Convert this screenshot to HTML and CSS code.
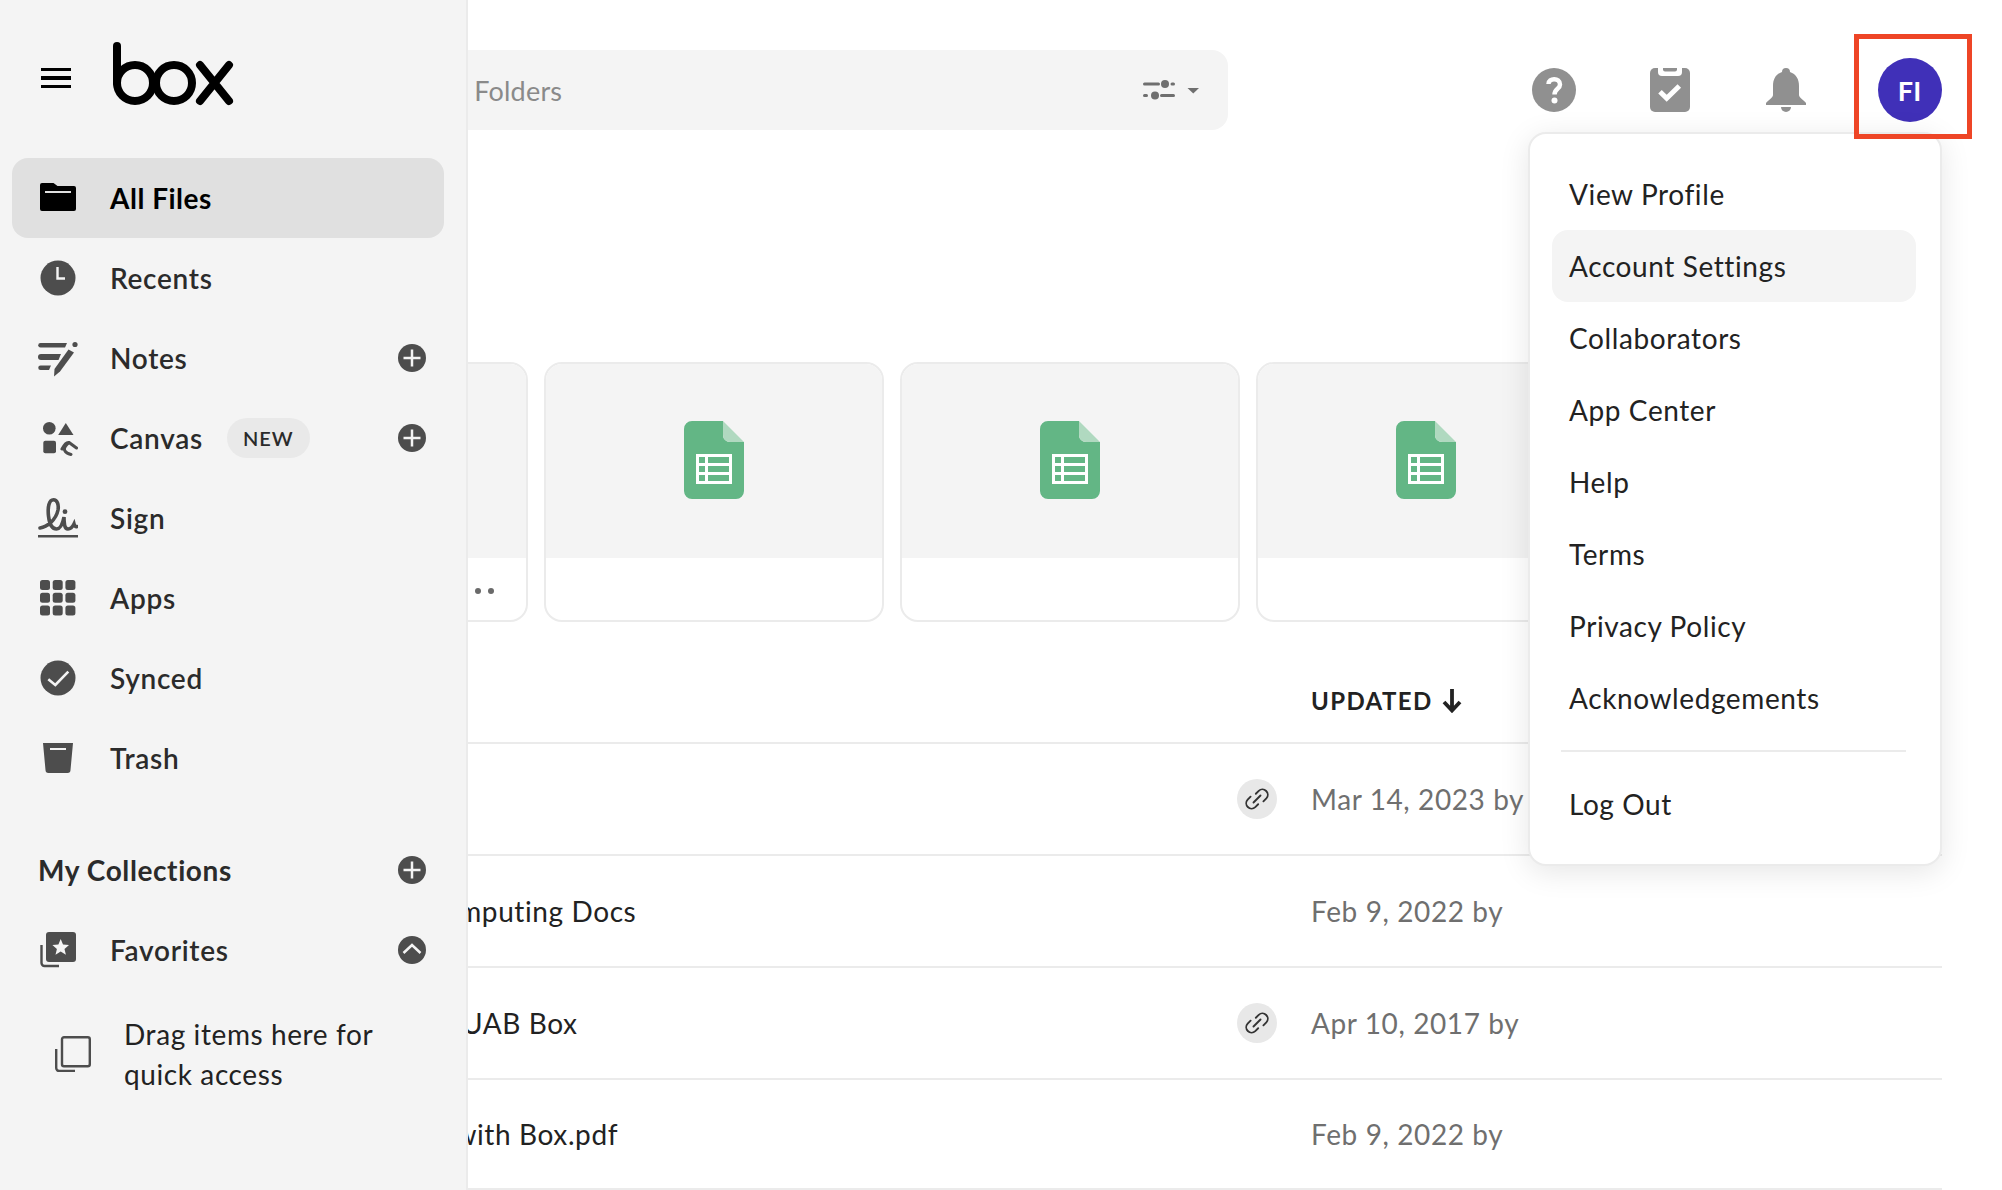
FILE: index.html
```html
<!DOCTYPE html>
<html lang="en">
<head>
    <meta charset="UTF-8">
    <meta name="viewport" content="width=device-width, initial-scale=1.0">
    <title>All Files | Box</title>
    <link rel="stylesheet" href="styles.css">
</head>
<body>
    <div class="app">
        <aside class="sidebar">
            <div class="brand">
                <div class="hamburger"><span></span><span></span><span></span></div>
                <svg class="logo" viewBox="112 42 122 64" fill="none" stroke="#000" stroke-width="8" stroke-linecap="round">
                    <path d="M117 46V83"/>
                    <circle cx="135" cy="83" r="18"/>
                    <circle cx="174" cy="83" r="18"/>
                    <path d="M200 65L229 101M229 65L200 101"/>
                </svg>
            </div>

            <nav class="nav">
                <a class="nav-item active">
                    <svg class="nav-icon" viewBox="0 0 40 40">
                        <path d="M4 5H15.500L19.500 8H36a2 2 0 0 1 2 2V31a2 2 0 0 1-2 2H4a2 2 0 0 1-2-2V7a2 2 0 0 1 2-2z" fill="#000"/>
                        <rect x="7" y="13" width="26" height="2" fill="#e0e0e0"/>
                    </svg>
                    <span>All Files</span>
                </a>
                <a class="nav-item">
                    <svg class="nav-icon" viewBox="0 0 40 40">
                        <circle cx="20" cy="20" r="17.500" fill="#4d4d4d"/>
                        <path d="M19.500 9V20.500H27" fill="none" stroke="#f4f4f4" stroke-width="2.400"/>
                    </svg>
                    <span>Recents</span>
                </a>
                <a class="nav-item">
                    <svg class="nav-icon" viewBox="0 0 40 40" fill="#4d4d4d">
                        <path d="M2.500 5H29L27 9.500H2.500a2.250 2.250 0 0 1 0-4.500z"/>
                        <path d="M3 16H23L20.500 22H3a3 3 0 0 1 0-6z"/>
                        <path d="M2.500 27.500H13L11 32H2.500a2.250 2.250 0 0 1 0-4.500z"/>
                        <path d="M16 38.500L16.500 31L30.500 11.500L36 14.500L22 33.500z"/>
                        <circle cx="37" cy="6.500" r="2.600"/>
                    </svg>
                    <span>Notes</span>
                    <svg class="round-btn" viewBox="0 0 28 28">
                        <circle cx="14" cy="14" r="14" fill="#4d4d4d"/>
                        <path d="M14 5.500V22.500M5.500 14H22.500" stroke="#f4f4f4" stroke-width="2.500"/>
                    </svg>
                </a>
                <a class="nav-item">
                    <svg class="nav-icon" viewBox="0 0 40 40" fill="#4d4d4d">
                        <circle cx="11.300" cy="10.300" r="6.300"/>
                        <path d="M27.800 5L35.500 17H20.200z"/>
                        <rect x="5.300" y="22.700" width="12.700" height="12.500" rx="2"/>
                        <path d="M24 31C26 27 29 24 31 24.500L38.500 30M31 24.500C28 27 25 30 27 33C28 35 31 36 33 36.500" fill="none" stroke="#4d4d4d" stroke-width="3" stroke-linecap="round"/>
                    </svg>
                    <span>Canvas</span>
                    <span class="pill">NEW</span>
                    <svg class="round-btn" viewBox="0 0 28 28">
                        <circle cx="14" cy="14" r="14" fill="#4d4d4d"/>
                        <path d="M14 5.500V22.500M5.500 14H22.500" stroke="#f4f4f4" stroke-width="2.500"/>
                    </svg>
                </a>
                <a class="nav-item">
                    <svg class="nav-icon" viewBox="0 0 40 40">
                        <path d="M2 30C9 29 18 22 20 12C21 6 19 1.800 15.500 1.800C11 1.800 9.500 9 10.500 18C11.500 27 14 31 18.500 31C23 31 25 24 26 19C26 24 26 31 30 31C33 31 35 28 36 26C36.500 28 37.500 29 39 28.500" fill="none" stroke="#4d4d4d" stroke-width="3.600" stroke-linecap="round"/>
                        <circle cx="27" cy="13.700" r="2.400" fill="#4d4d4d"/>
                        <rect x="0" y="37" width="40" height="2.500" fill="#4d4d4d"/>
                    </svg>
                    <span>Sign</span>
                </a>
                <a class="nav-item">
                    <svg class="nav-icon" viewBox="0 0 40 40" fill="#4d4d4d">
                        <rect x="2" y="2" width="10" height="10" rx="2.500"/>
                        <rect x="14.700" y="2" width="10" height="10" rx="2.500"/>
                        <rect x="27.400" y="2" width="10" height="10" rx="2.500"/>
                        <rect x="2" y="14.700" width="10" height="10" rx="2.500"/>
                        <rect x="14.700" y="14.700" width="10" height="10" rx="2.500"/>
                        <rect x="27.400" y="14.700" width="10" height="10" rx="2.500"/>
                        <rect x="2" y="27.400" width="10" height="10" rx="2.500"/>
                        <rect x="14.700" y="27.400" width="10" height="10" rx="2.500"/>
                        <rect x="27.400" y="27.400" width="10" height="10" rx="2.500"/>
                    </svg>
                    <span>Apps</span>
                </a>
                <a class="nav-item">
                    <svg class="nav-icon" viewBox="0 0 40 40">
                        <circle cx="20" cy="20" r="17.500" fill="#4d4d4d"/>
                        <path d="M10.300 21.300L17.300 27L30.300 13.700" fill="none" stroke="#f4f4f4" stroke-width="2.600"/>
                    </svg>
                    <span>Synced</span>
                </a>
                <a class="nav-item">
                    <svg class="nav-icon" viewBox="0 0 40 40">
                        <path d="M5 5H35L32.500 32a3 3 0 0 1-3 3H10.500a3 3 0 0 1-3-3z" fill="#4d4d4d"/>
                        <rect x="12" y="10" width="16" height="2" fill="#f4f4f4"/>
                    </svg>
                    <span>Trash</span>
                </a>
            </nav>

            <div class="collections">
                <div class="collections-head">
                    <span>My Collections</span>
                    <svg class="round-btn" viewBox="0 0 28 28">
                        <circle cx="14" cy="14" r="14" fill="#4d4d4d"/>
                        <path d="M14 5.500V22.500M5.500 14H22.500" stroke="#f4f4f4" stroke-width="2.500"/>
                    </svg>
                </div>
                <a class="nav-item">
                    <svg class="nav-icon" viewBox="0 0 40 40">
                        <rect x="8" y="2" width="30" height="30" rx="3" fill="#4d4d4d"/>
                        <path d="M3.500 15V33a3 3 0 0 0 3 3H21" fill="none" stroke="#4d4d4d" stroke-width="2.400"/>
                        <path d="M22.700 9L25 14.500L31 15L26.500 18.900L27.900 24.700L22.700 21.600L17.500 24.700L18.900 18.900L14.400 15L20.400 14.500z" fill="#f4f4f4"/>
                    </svg>
                    <span>Favorites</span>
                    <svg class="round-btn" viewBox="0 0 28 28">
                        <circle cx="14" cy="14" r="14" fill="#4d4d4d"/>
                        <path d="M5.500 17L14 9L22.500 17" fill="none" stroke="#f4f4f4" stroke-width="2.500"/>
                    </svg>
                </a>
                <div class="drag-hint">
                    <svg class="drag-icon" viewBox="0 0 36 36" fill="none" stroke="#4d4d4d" stroke-width="2.400">
                        <rect x="7" y="1.200" width="27.800" height="29" rx="2"/>
                        <path d="M1.200 13V32a3 3 0 0 0 3 3H20"/>
                    </svg>
                    <p>Drag items here for<br>quick access</p>
                </div>
            </div>
        </aside>

        <main class="main">
            <header class="topbar">
                <div class="search">
                    <span class="search-text">Search Files and Folders</span>
                    <svg class="filter-icon" viewBox="0 0 56 20" fill="#6f6f6f">
                        <rect x="0" y="2.500" width="17" height="3" rx="1.500"/>
                        <circle cx="22" cy="4" r="4"/>
                        <rect x="27.500" y="2.500" width="4.500" height="3" rx="1.500"/>
                        <rect x="0" y="14" width="5" height="3" rx="1.500"/>
                        <circle cx="12" cy="15.500" r="4"/>
                        <rect x="17" y="14" width="15" height="3" rx="1.500"/>
                        <path d="M44.500 8H56L50.250 13.500z"/>
                    </svg>
                </div>
                <div class="actions">
                    <svg class="action-icon" viewBox="0 0 44 44">
                        <circle cx="22" cy="22" r="22" fill="#909090"/>
                        <path d="M16.500 16C16.500 9.500 28 9.500 28 16.500C28 21 22.500 20.500 22.500 26.500" fill="none" stroke="#fff" stroke-width="4.500"/>
                        <circle cx="22.500" cy="32.500" r="3" fill="#fff"/>
                    </svg>
                    <svg class="action-icon" viewBox="0 0 44 44">
                        <rect x="2" y="0" width="40" height="44" rx="5" fill="#909090"/>
                        <path d="M10 0H34V4a4 4 0 0 1-4 4H14a4 4 0 0 1-4-4z" fill="#fff"/>
                        <path d="M15 0H29V1.500a2 2 0 0 1-2 2H17a2 2 0 0 1-2-2z" fill="#909090"/>
                        <path d="M12 23.700L18.700 30.300L31.300 18" fill="none" stroke="#fff" stroke-width="5"/>
                    </svg>
                    <svg class="action-icon" viewBox="0 0 44 44" fill="#909090">
                        <path d="M22 0a4 4 0 0 1 4 4C32 6 35 11 35 18V27C35 30 40 32 42 35V37H2V35C4 32 9 30 9 27V18C9 11 12 6 18 4a4 4 0 0 1 4-4z"/>
                        <path d="M17 39H27a5 5 0 0 1-10 0z"/>
                    </svg>
                    <div class="avatar">
                        FI
                        <div class="callout"></div>
                    </div>
                </div>
            </header>

            <section class="cards">
                <div class="card">
                    <div class="card-preview"></div>
                    <div class="card-foot">
                        <div class="dots"><span></span><span></span><span></span></div>
                    </div>
                </div>
                <div class="card">
                    <div class="card-preview">
                        <svg class="sheet-icon" viewBox="0 0 60 78">
                            <path d="M8 0H39V14a7 7 0 0 0 7 7H60V70a8 8 0 0 1-8 8H8a8 8 0 0 1-8-8V8a8 8 0 0 1 8-8z" fill="#63b685"/>
                            <path d="M39 0L60 21H46a7 7 0 0 1-7-7z" fill="#b0d9c0"/>
                            <path fill-rule="evenodd" d="M12 33H48V63H12zM15 36V42H21V36zM24 36V42H45V36zM15 45V51H21V45zM24 45V51H45V45zM15 54V60H21V54zM24 54V60H45V54z" fill="#fff"/>
                        </svg>
                    </div>
                    <div class="card-foot"></div>
                </div>
                <div class="card">
                    <div class="card-preview">
                        <svg class="sheet-icon" viewBox="0 0 60 78">
                            <path d="M8 0H39V14a7 7 0 0 0 7 7H60V70a8 8 0 0 1-8 8H8a8 8 0 0 1-8-8V8a8 8 0 0 1 8-8z" fill="#63b685"/>
                            <path d="M39 0L60 21H46a7 7 0 0 1-7-7z" fill="#b0d9c0"/>
                            <path fill-rule="evenodd" d="M12 33H48V63H12zM15 36V42H21V36zM24 36V42H45V36zM15 45V51H21V45zM24 45V51H45V45zM15 54V60H21V54zM24 54V60H45V54z" fill="#fff"/>
                        </svg>
                    </div>
                    <div class="card-foot"></div>
                </div>
                <div class="card">
                    <div class="card-preview">
                        <svg class="sheet-icon" viewBox="0 0 60 78">
                            <path d="M8 0H39V14a7 7 0 0 0 7 7H60V70a8 8 0 0 1-8 8H8a8 8 0 0 1-8-8V8a8 8 0 0 1 8-8z" fill="#63b685"/>
                            <path d="M39 0L60 21H46a7 7 0 0 1-7-7z" fill="#b0d9c0"/>
                            <path fill-rule="evenodd" d="M12 33H48V63H12zM15 36V42H21V36zM24 36V42H45V36zM15 45V51H21V45zM24 45V51H45V45zM15 54V60H21V54zM24 54V60H45V54z" fill="#fff"/>
                        </svg>
                    </div>
                    <div class="card-foot"></div>
                </div>
            </section>

            <section class="files">
                <div class="files-head">
                    <span class="updated-head">UPDATED
                        <svg class="sort-arrow" viewBox="0 0 20 24" fill="none" stroke="#222" stroke-width="3.800">
                            <path d="M10 0V21M2 13L10 21.500L18 13"/>
                        </svg>
                    </span>
                </div>
                <div class="file-row">
                    <span class="file-name"></span>
                    <span class="link-chip">
                        <svg viewBox="0 0 24 24" fill="none" stroke="#333" stroke-width="1.600" stroke-linecap="round">
                            <path d="M11 7.500L13.500 5a4.600 4.600 0 0 1 6.500 6.500L17.500 14M13 16.500L10.500 19a4.600 4.600 0 0 1-6.500-6.500L6.500 10M9 15L15 9"/>
                        </svg>
                    </span>
                    <span class="file-date">Mar 14, 2023 by</span>
                </div>
                <div class="file-row">
                    <span class="file-name name-docs">Research &amp; Computing Docs</span>
                    <span></span>
                    <span class="file-date">Feb 9, 2022 by</span>
                </div>
                <div class="file-row">
                    <span class="file-name name-uab">UAB Box</span>
                    <span class="link-chip">
                        <svg viewBox="0 0 24 24" fill="none" stroke="#333" stroke-width="1.600" stroke-linecap="round">
                            <path d="M11 7.500L13.500 5a4.600 4.600 0 0 1 6.500 6.500L17.500 14M13 16.500L10.500 19a4.600 4.600 0 0 1-6.500-6.500L6.500 10M9 15L15 9"/>
                        </svg>
                    </span>
                    <span class="file-date">Apr 10, 2017 by</span>
                </div>
                <div class="file-row file-row-last">
                    <span class="file-name name-guide">Getting Started with Box.pdf</span>
                    <span></span>
                    <span class="file-date">Feb 9, 2022 by</span>
                </div>
            </section>
        </main>

        <div class="menu">
            <a class="menu-item">View Profile</a>
            <a class="menu-item hover">Account Settings</a>
            <a class="menu-item">Collaborators</a>
            <a class="menu-item">App Center</a>
            <a class="menu-item">Help</a>
            <a class="menu-item">Terms</a>
            <a class="menu-item">Privacy Policy</a>
            <a class="menu-item">Acknowledgements</a>
            <div class="menu-divider"></div>
            <a class="menu-item">Log Out</a>
        </div>
    </div>
</body>
</html>
```

FILE: styles.css
```css
* {
    box-sizing: border-box;
}

body {
    margin: 0;
    font-family: Lato, "Open Sans", sans-serif;
    font-size: 28px;
    letter-spacing: 0.6px;
    color: #222;
    background: white;
}

.app {
    position: relative;
    display: flex;
    height: 100vh;
    overflow: hidden;
}

/* sidebar */
.sidebar {
    position: relative;
    z-index: 2;
    flex: none;
    width: 468px;
    background-color: #f4f4f4;
    border-right: 2px solid #ebebeb;
}

.brand {
    display: flex;
    align-items: flex-start;
    gap: 41px;
    height: 158px;
    padding: 42px 0 0 41px;
}

.hamburger {
    display: flex;
    flex-direction: column;
    gap: 5.300px;
    margin-top: 26px;
}

.hamburger span {
    display: block;
    width: 30px;
    height: 3.200px;
    background-color: #000;
}

.logo {
    width: 122px;
    height: 64px;
}

.nav {
    margin: 0 22px 0 12px;
}

.nav-item {
    display: flex;
    align-items: center;
    height: 80px;
    padding: 0 18px 0 26px;
    border-radius: 16px;
    font-weight: 600;
    letter-spacing: 0.7px;
    color: #2b2b2b;
}

.nav-item.active {
    background-color: #e0e0e0;
    font-weight: 700;
    letter-spacing: 0.5px;
    color: #000;
}

.nav-icon {
    flex: none;
    width: 40px;
    height: 40px;
    margin-right: 32px;
}

.round-btn {
    flex: none;
    width: 28px;
    height: 28px;
    margin-left: auto;
}

.pill {
    margin-left: 24px;
    padding: 0 16px;
    height: 40px;
    line-height: 40px;
    border-radius: 20px;
    background-color: #e9e9e9;
    font-size: 20px;
    letter-spacing: 1px;
}

.collections {
    margin: 32px 22px 0 12px;
}

.collections-head {
    display: flex;
    align-items: center;
    height: 80px;
    padding: 0 18px 0 26px;
    font-weight: 700;
    letter-spacing: 0.6px;
    color: #2b2b2b;
}

.drag-hint {
    display: flex;
    align-items: center;
    gap: 33px;
    margin-top: 24px;
    padding-left: 43px;
}

.drag-icon {
    flex: none;
    width: 36px;
    height: 36px;
}

.drag-hint p {
    margin: 0;
    line-height: 40px;
}

/* main column, its left part runs under the sidebar */
.main {
    flex: none;
    width: 1864px;
    margin-left: -330px;
    padding-right: 60px;
}

.topbar {
    display: flex;
    align-items: center;
    justify-content: space-between;
    height: 130px;
    padding-top: 50px;
}

.search {
    display: flex;
    align-items: center;
    justify-content: space-between;
    width: 1090px;
    height: 80px;
    padding: 0 29px 0 135px;
    background-color: #f4f4f4;
    border-radius: 16px;
    color: #8a8a8a;
    font-size: 27px;
    letter-spacing: 0.2px;
}

.filter-icon {
    width: 56px;
    height: 20px;
}

.actions {
    display: flex;
    align-items: center;
    gap: 72px;
}

.action-icon {
    display: block;
    width: 44px;
    height: 44px;
}

.avatar {
    position: relative;
    display: flex;
    align-items: center;
    justify-content: center;
    width: 64px;
    height: 64px;
    margin-left: -2px;
    padding-right: 1px;
    border-radius: 50%;
    background-color: #4030b8;
    color: white;
    font-size: 27px;
    font-weight: 700;
    letter-spacing: 0;
}

.callout {
    position: absolute;
    z-index: 5;
    top: -24px;
    left: -24px;
    right: -30px;
    bottom: -17px;
    border: 5px solid #ee4526;
}

/* recent cards */
.cards {
    display: flex;
    gap: 16px;
    margin: 232px 0 0 50px;
}

.card {
    flex: none;
    width: 340px;
    height: 260px;
    border: 2px solid #ebebeb;
    border-radius: 18px;
    overflow: hidden;
}

.card-preview {
    display: flex;
    align-items: center;
    justify-content: center;
    height: 194px;
    background-color: #f4f4f4;
}

.sheet-icon {
    width: 60px;
    height: 78px;
    margin-bottom: 2px;
}

.card-foot {
    display: flex;
    justify-content: flex-end;
    padding: 30px 32px 0 0;
}

.dots {
    display: flex;
    gap: 7px;
}

.dots span {
    width: 6px;
    height: 6px;
    border-radius: 50%;
    background-color: #6a6a6a;
}

/* file list */
.files-head {
    display: flex;
    align-items: flex-end;
    height: 122px;
    padding: 0 0 27px 1173px;
    border-bottom: 2px solid #ebebeb;
}

.updated-head {
    display: flex;
    align-items: center;
    gap: 9px;
    font-size: 24px;
    font-weight: 700;
    letter-spacing: 1.400px;
}

.sort-arrow {
    width: 20px;
    height: 24px;
}

.file-row {
    display: grid;
    grid-template-columns: 1fr 40px 631px;
    column-gap: 34px;
    align-items: center;
    height: 112px;
    padding-left: 126px;
    border-bottom: 2px solid #ebebeb;
}

.file-row-last {
    height: 110px;
}

.name-docs {
    margin-left: 7px;
}

.name-uab {
    margin-left: 198px;
}

.name-guide {
    margin-left: -14px;
}

.file-date {
    color: #6f6f6f;
}

.link-chip {
    display: flex;
    align-items: center;
    justify-content: center;
    width: 40px;
    height: 40px;
    border-radius: 50%;
    background-color: #e8e8e8;
}

.link-chip svg {
    width: 28px;
    height: 28px;
}

/* account dropdown */
.menu {
    position: absolute;
    z-index: 4;
    top: 132px;
    right: 60px;
    width: 414px;
    padding: 24px 24px 24px 22px;
    background: white;
    border: 2px solid #ebebeb;
    border-radius: 18px;
    box-shadow: 0 6px 30px rgba(0, 0, 0, 0.1);
}

.menu-item {
    display: block;
    height: 72px;
    padding-left: 17px;
    line-height: 72px;
    border-radius: 16px;
}

.menu-item.hover {
    background-color: #f4f4f4;
}

.menu-divider {
    height: 2px;
    margin: 16px 10px 16px 9px;
    background-color: #ebebeb;
}
```
